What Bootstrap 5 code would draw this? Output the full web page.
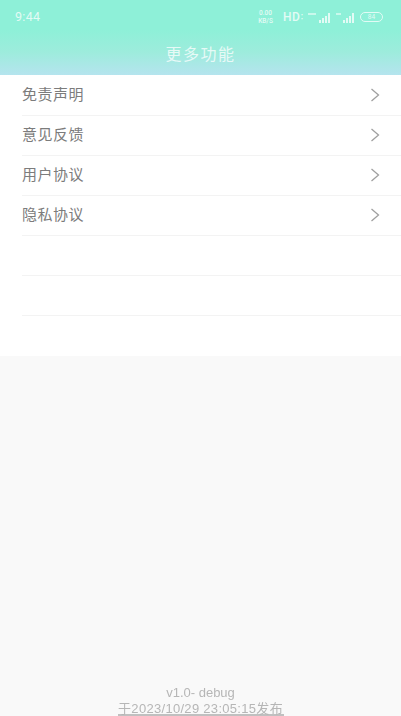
<!DOCTYPE html>
<html lang="zh">
<head>
<meta charset="utf-8">
<link href="https://cdn.jsdelivr.net/npm/bootstrap@5.3.0/dist/css/bootstrap.min.css" rel="stylesheet">
<style>
html,body{height:716px;overflow:hidden}
body{background:#f9f9f9;font-family:"Noto Sans CJK SC","Roboto",sans-serif;color:#777}
.screen{height:716px;filter:blur(.45px)}
.appbar{height:75px;background:linear-gradient(180deg,#8ef0d8 0,#8ef0d8 30px,#9decdc 52px,#b5e4ee 75px);color:#fff}
.statusline{height:34px;padding:0 18px 0 15px;font-family:"Roboto",sans-serif;font-size:12px;opacity:.75}
.clock{font-size:12.5px;letter-spacing:.3px}
.speed{font-size:6.5px;line-height:8px;text-align:center;font-weight:500;width:19px}
.hdtag{font-size:12px;font-weight:500;letter-spacing:.4px;width:20px;margin-left:8px}
.signalone{margin-left:5px}
.signaltwo{margin-left:4px}
.batt{width:23px;height:10px;margin-left:4px;border:1px solid #fff;border-radius:5px;font-size:6.5px;line-height:8px;text-align:center}
.apptitle{height:41px;font-size:16px;line-height:39px;text-align:center;opacity:.75;letter-spacing:1.5px}
.menulist{background:#fff;height:281px}
.menurow{height:40px;margin-left:22px;border-bottom:1px solid #f3f3f3;padding-right:21px;padding-bottom:2px;font-size:15px;color:#7c7c7c;letter-spacing:.5px}
.toprow{height:41px;padding-bottom:1px}
.chev{stroke:#a0a0a0}
.footnote{font-family:"Liberation Sans","Noto Sans CJK SC",sans-serif;font-size:13px;color:#b6b6b6;text-align:center}
.footfirst{height:16px;line-height:20px}
.footlast{border-bottom:2px solid #c0c0c0;width:166px;height:17px;line-height:19px;white-space:nowrap;letter-spacing:.3px;display:flex;justify-content:center}
</style>
</head>
<body>
<div class="screen d-flex flex-column">
  <header class="appbar">
    <div class="statusline d-flex align-items-center justify-content-between">
      <span class="clock">9:44</span>
      <span class="d-flex align-items-center">
        <span class="speed">0.00<br>KB/S</span>
        <span class="hdtag">HD꞉</span>
        <svg class="signalone" width="24" height="11" viewBox="0 0 24 11" fill="#fff"><rect x="11" y="8" width="2" height="3"/><rect x="14" y="6" width="2" height="5"/><rect x="17" y="4" width="2" height="7"/><rect x="20" y="1" width="2" height="10"/><rect x="0" y="1" width="8" height="2" opacity=".7"/></svg>
        <svg class="signaltwo" width="20" height="11" viewBox="0 0 20 11" fill="#fff"><rect x="7" y="8" width="2" height="3"/><rect x="10" y="6" width="2" height="5"/><rect x="13" y="4" width="2" height="7"/><rect x="16" y="1" width="2" height="10"/><rect x="0" y="1" width="5" height="2" opacity=".7"/></svg>
        <span class="batt">84</span>
      </span>
    </div>
    <div class="apptitle">更多功能</div>
  </header>
  <main class="menulist">
    <div class="menurow toprow d-flex align-items-center justify-content-between"><span>免责声明</span><svg class="chev" width="10" height="14" viewBox="0 0 10 14" fill="none" stroke-width="1.3"><path d="M1.5 1l7 6-7 6"/></svg></div>
    <div class="menurow d-flex align-items-center justify-content-between"><span>意见反馈</span><svg class="chev" width="10" height="14" viewBox="0 0 10 14" fill="none" stroke-width="1.3"><path d="M1.5 1l7 6-7 6"/></svg></div>
    <div class="menurow d-flex align-items-center justify-content-between"><span>用户协议</span><svg class="chev" width="10" height="14" viewBox="0 0 10 14" fill="none" stroke-width="1.3"><path d="M1.5 1l7 6-7 6"/></svg></div>
    <div class="menurow d-flex align-items-center justify-content-between"><span>隐私协议</span><svg class="chev" width="10" height="14" viewBox="0 0 10 14" fill="none" stroke-width="1.3"><path d="M1.5 1l7 6-7 6"/></svg></div>
    <div class="menurow"></div>
    <div class="menurow"></div>
  </main>
  <footer class="mt-auto d-flex flex-column align-items-center footnote">
    <div class="footfirst">v1.0- debug</div>
    <div class="footlast">于2023/10/29 23:05:15发布</div>
  </footer>
</div>
<script src="https://cdn.jsdelivr.net/npm/bootstrap@5.3.0/dist/js/bootstrap.bundle.min.js"></script>
</body>
</html>
